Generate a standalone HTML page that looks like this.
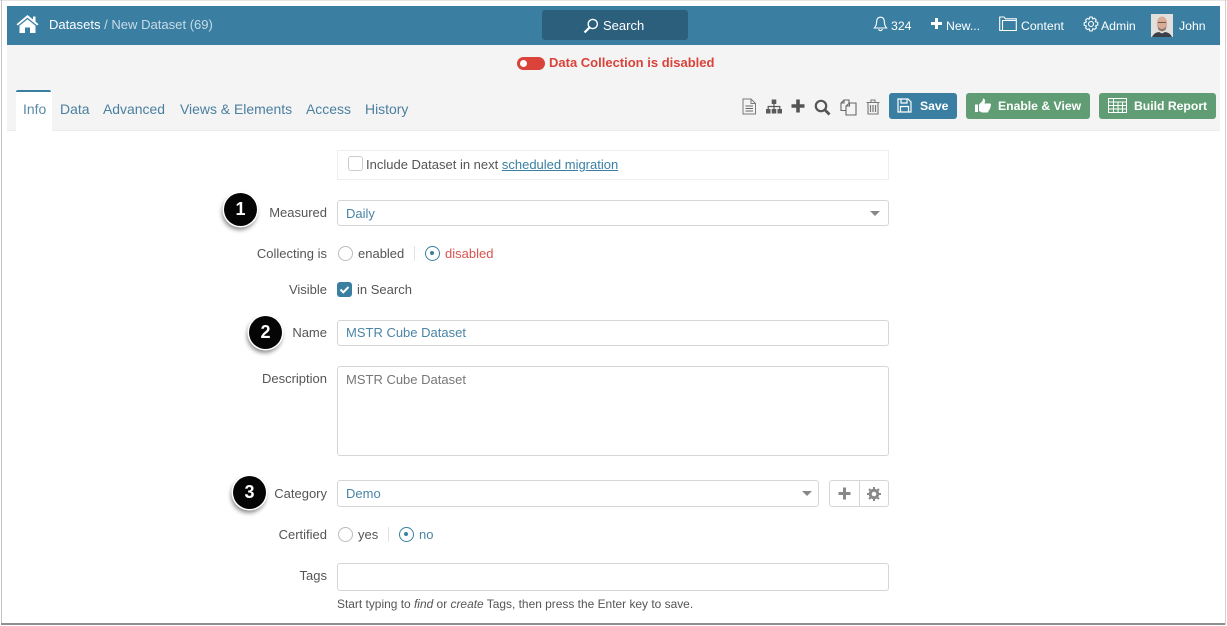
<!DOCTYPE html>
<html><head><meta charset="utf-8">
<style>
html,body{margin:0;padding:0;background:#fff}
#p{position:relative;width:1227px;height:626px;overflow:hidden;background:#fff;font-family:"Liberation Sans",sans-serif;font-size:13px;color:#555;filter:blur(.3px)}
#p>*{position:absolute}
.t{white-space:nowrap;line-height:16px}
.lbl{right:900px;white-space:nowrap;line-height:16px;color:#555;font-size:13px}
.box{box-sizing:border-box;background:#fff;border:1px solid #d6d6d6;border-radius:3px}
.val{color:#4a84a6;white-space:nowrap;line-height:16px;font-size:13px}
.tab{top:101px;color:#4a7f9f;font-size:13.95px;line-height:16px;white-space:nowrap}
.wh{color:#fff;font-size:12.25px;line-height:16px;white-space:nowrap}
.btn{border-radius:3px;height:26px;top:93px;color:#fff;font-weight:bold;font-size:12.2px;line-height:26px;white-space:nowrap;box-sizing:border-box}
.num{width:33px;height:33px;border-radius:50%;background:#050505;color:#fff;font-size:18px;font-weight:bold;text-align:center;line-height:33px;box-shadow:0 0 0 1.5px #fff,-1px 3px 4px 1px rgba(0,0,0,.45)}
.rad{box-sizing:border-box;width:15px;height:15px;border-radius:50%;border:1px solid #bbb;background:#fff}
.on{border:1.5px solid #3a7fa2}
.on:after{content:"";position:absolute;left:4px;top:4px;width:4px;height:4px;border-radius:50%;background:#3a7fa2}
</style></head><body>
<div id="p">
<div style="left:0;top:0;width:1227px;height:1px;background:#e4e4e4"></div>
<div style="left:1px;top:0;width:1px;height:625px;background:#c4c4c4"></div>
<div style="left:1px;top:623px;width:1224px;height:2px;background:#8e8e8e"></div>
<div style="left:1225px;top:0;width:1px;height:625px;background:#d0d0d0"></div>

<div style="left:7px;top:6px;width:1213px;height:39px;background:#3a7fa2"></div>
<div style="left:7px;top:45px;width:1213px;height:85px;background:#f4f4f4"></div>
<div style="left:7px;top:130px;width:1213px;height:1px;background:#ececec"></div>

<svg style="left:16px;top:14px" width="23" height="20" viewBox="0 0 23 20"><path d="M11.5 1 L17 5.5 V2.5 H19.5 V7.5 L22.5 10.2 L21.2 11.5 L11.5 3.6 L1.8 11.5 L.5 10.2 Z M11.5 5.2 L19.5 11.8 V19 H14 V13.5 H9 V19 H3.5 V11.8 Z" fill="#fff"/></svg>
<div class="wh" style="left:49px;top:17px;font-size:13.05px">Datasets <span style="color:#c8dbe6">/ New Dataset (69)</span></div>

<div style="left:542px;top:10px;width:146px;height:30px;border-radius:3px;background:#2b5f7b"></div>
<svg style="left:583px;top:18px" width="16" height="16" viewBox="0 0 16 16"><circle cx="9.8" cy="6" r="4.6" fill="none" stroke="#fff" stroke-width="1.4"/><path d="M6.5 9.5 L1.5 14.5" stroke="#fff" stroke-width="2.2"/></svg>
<div class="wh" style="left:603px;top:18px;font-size:13px">Search</div>

<svg style="left:873px;top:16px" width="15" height="16" viewBox="0 0 15 16"><path d="M7.5 1.2 C4.6 1.2 3.6 3.6 3.6 6 C3.6 9 2.8 10.4 1.4 12 H13.6 C12.2 10.4 11.4 9 11.4 6 C11.4 3.6 10.4 1.2 7.5 1.2 Z M5.8 13 C6 15.2 9 15.2 9.2 13" fill="none" stroke="#fff" stroke-width="1.1"/></svg>
<div class="wh" style="left:891px;top:18px">324</div>
<svg style="left:930px;top:17px" width="13" height="13" viewBox="0 0 13 13"><path d="M6.5 1 V12 M1 6.5 H12" stroke="#fff" stroke-width="3"/></svg>
<div class="wh" style="left:946px;top:18px">New...</div>
<svg style="left:999px;top:15px" width="18" height="17" viewBox="0 0 18 17"><path d="M.7 15.5 V2 H5 L6.5 3.8 H17.3 V15.5 Z M3.5 15.5 V5.5 H17.3" fill="none" stroke="#fff" stroke-width="1.1"/></svg>
<div class="wh" style="left:1021px;top:18px">Content</div>
<svg style="left:1083px;top:16px" width="16" height="16" viewBox="0 0 16 16"><circle cx="8" cy="8" r="2.5" fill="none" stroke="#fff" stroke-width="1.1"/><path d="M6.8 1 H9.2 L9.6 3 L11.4 2.2 L13.2 3.8 L12.4 5.6 L14.8 6.4 V9 L12.6 9.8 L13.4 11.8 L11.6 13.4 L9.8 12.6 L9.2 15 H6.8 L6.2 12.8 L4.4 13.6 L2.6 11.8 L3.4 10 L1.2 9.2 V6.8 L3.4 6 L2.6 4 L4.4 2.4 L6.2 3.2 Z" fill="none" stroke="#fff" stroke-width="1.1" stroke-linejoin="round"/></svg>
<div class="wh" style="left:1101px;top:18px">Admin</div>
<svg style="left:1151px;top:14px" width="22" height="23" viewBox="0 0 22 23"><rect width="22" height="23" fill="#e2e0dc"/><ellipse cx="11" cy="9.5" rx="5.200" ry="7" fill="#d8ac96"/><path d="M6.500 12 Q11 18 15.500 12 L14.500 16 L11 17.500 L7.500 16 Z" fill="#8b7568"/><path d="M7 8.500 H15" stroke="#6b5a50" stroke-width="1"/><path d="M1 23 Q3 18.500 8 18 L11 19.500 L14 18 Q19 18.500 21 23 Z" fill="#3c3f48"/></svg>
<div class="wh" style="left:1179px;top:18px">John</div>

<div style="left:517px;top:57px;width:28px;height:13px;border-radius:7px;background:#d9433a"></div>
<div style="left:520px;top:60px;width:7px;height:7px;border-radius:50%;background:#fff"></div>
<div class="t" style="left:549px;top:55px;color:#d9433a;font-weight:bold;font-size:13px">Data Collection is disabled</div>

<div style="left:16px;top:90px;width:36px;height:41px;background:#fff;border-radius:2px 2px 0 0"></div>
<div style="left:16px;top:90px;width:35px;height:2px;background:#3a7fa2;border-radius:2px 2px 0 0"></div>
<div class="tab" style="left:23px;color:#5b8aa6">Info</div>
<div class="tab" style="left:60px">Data</div>
<div class="tab" style="left:103px">Advanced</div>
<div class="tab" style="left:180px">Views &amp; Elements</div>
<div class="tab" style="left:306px">Access</div>
<div class="tab" style="left:365px">History</div>

<svg style="left:741px;top:98px" width="16" height="17" viewBox="0 0 16 17"><path d="M2 1 H10 L14.500 5.500 V16 H2 Z M10 1 V5.500 H14.500" fill="none" stroke="#7a7a7a" stroke-width="1"/><path d="M4.500 8 H12 M4.500 10.500 H12 M4.500 13 H12" stroke="#666" stroke-width="1"/></svg>
<svg style="left:766px;top:99px" width="16" height="15" viewBox="0 0 16 15"><path d="M5.700 0.500 H10.300 V5 H5.700 Z M0 10 H4.500 V14.500 H0 Z M5.700 10 H10.300 V14.500 H5.700 Z M11.500 10 H16 V14.500 H11.500 Z" fill="#5a5a5a"/><path d="M8 5 V10 M2.200 10 V7.500 H13.800 V10" fill="none" stroke="#5a5a5a" stroke-width="1.200"/></svg>
<svg style="left:791px;top:99px" width="14" height="14" viewBox="0 0 14 14"><path d="M7 .5 V13.500 M.5 7 H13.500" stroke="#555" stroke-width="3.600"/></svg>
<svg style="left:814px;top:99px" width="17" height="17" viewBox="0 0 17 17"><circle cx="7" cy="7" r="5.200" fill="none" stroke="#555" stroke-width="2.200"/><path d="M10.800 10.800 L15.500 15.500" stroke="#555" stroke-width="2.800"/></svg>
<svg style="left:840px;top:99px" width="17" height="17" viewBox="0 0 17 17"><path d="M1 4 L4 1 H9 V11.500 H1 Z M1 4 H4 V1" fill="none" stroke="#666" stroke-width="1.100"/><path d="M6 7 L9.500 4 H16 V16 H6 Z M9.500 4 V7 H6" fill="#f4f4f4" stroke="#666" stroke-width="1.100"/></svg>
<svg style="left:866px;top:99px" width="14" height="16" viewBox="0 0 14 16"><path d="M.5 3.500 H13.500 M5 3 V1 H9 V3 M2 4 V15 H12 V4" fill="none" stroke="#777" stroke-width="1.100"/><path d="M4.500 6 V13 M7 6 V13 M9.500 6 V13" stroke="#777" stroke-width="1.200"/></svg>

<div class="btn" style="left:889px;width:68px;background:#3a7fa2;padding-left:31px">Save</div>
<svg style="left:897px;top:98px" width="15" height="15" viewBox="0 0 15 15"><path d="M1 1 H11 L14 4 V14 H1 Z" fill="none" stroke="#fff" stroke-width="1.200"/><path d="M4 1 V5 H10 V1 M3.500 14 V8.500 H11.500 V14" fill="none" stroke="#fff" stroke-width="1.200"/></svg>
<div class="btn" style="left:966px;width:124px;background:#609d74;padding-left:32px">Enable &amp; View</div>
<svg style="left:975px;top:98px" width="16" height="15" viewBox="0 0 16 15"><path d="M0 6.500 H3 V14 H0 Z M4 6.500 L7.500 3 L8 0.500 C10 .5 10.500 2.500 9.500 5.500 H15 C16.300 5.500 16.300 8 15.300 8.300 C15.800 9.500 15.300 10.500 14.500 10.700 C14.800 11.800 14.300 12.500 13.500 12.700 C13.500 14 12.800 14.500 11.800 14.500 H7 L4 13 Z" fill="#fff"/></svg>
<div class="btn" style="left:1099px;width:117px;background:#609d74;padding-left:35px">Build Report</div>
<svg style="left:1108px;top:98px" width="19" height="15" viewBox="0 0 19 15"><path d="M.5 .5 H18.500 V14.500 H.5 Z M.5 4 H18.500 M.5 7.500 H18.500 M.5 11 H18.500 M5.500 .5 V14.500 M10 4 V14.500 M14.500 4 V14.500" fill="none" stroke="#fff" stroke-width="1"/></svg>

<div style="left:337px;top:150px;width:552px;height:30px;box-sizing:border-box;border:1px solid #eeeeee"></div>
<div style="left:348px;top:156px;width:15px;height:15px;box-sizing:border-box;border:1px solid #ccc;border-radius:3px;background:#fff"></div>
<div class="t" style="left:366px;top:157px">Include Dataset in next <span style="color:#3a7fa2;text-decoration:underline">scheduled migration</span></div>

<div class="num" style="left:224px;top:193px">1</div>
<div class="lbl" style="top:205px">Measured</div>
<div class="box" style="left:337px;top:200px;width:552px;height:26px"></div>
<div class="val" style="left:346px;top:206px">Daily</div>
<div style="left:870px;top:211px;width:0;height:0;border-left:5px solid transparent;border-right:5px solid transparent;border-top:5px solid #888"></div>

<div class="lbl" style="top:246px">Collecting is</div>
<div class="rad" style="left:338px;top:246px"></div>
<div class="t" style="left:358px;top:246px">enabled</div>
<div style="left:414px;top:246px;width:1px;height:15px;background:#e2e2e2"></div>
<div class="rad on" style="left:425px;top:246px"></div>
<div class="t" style="left:445px;top:246px;color:#d9534f">disabled</div>

<div class="lbl" style="top:282px">Visible</div>
<div style="left:337px;top:282px;width:15px;height:15px;border-radius:3px;background:#3a7fa2"></div>
<svg style="left:337px;top:282px" width="15" height="15" viewBox="0 0 15 15"><path d="M3.500 7.500 L6.300 10.300 L11.500 5" fill="none" stroke="#fff" stroke-width="2"/></svg>
<div class="t" style="left:357px;top:282px">in Search</div>

<div class="num" style="left:249px;top:316px">2</div>
<div class="lbl" style="top:325px">Name</div>
<div class="box" style="left:337px;top:320px;width:552px;height:26px"></div>
<div class="val" style="left:346px;top:325px">MSTR Cube Dataset</div>

<div class="lbl" style="top:371px">Description</div>
<div class="box" style="left:337px;top:366px;width:552px;height:90px"></div>
<div class="t" style="left:346px;top:372px;color:#777">MSTR Cube Dataset</div>

<div class="num" style="left:233px;top:476px">3</div>
<div class="lbl" style="top:486px">Category</div>
<div class="box" style="left:337px;top:480px;width:482px;height:27px"></div>
<div class="val" style="left:346px;top:486px">Demo</div>
<div style="left:802px;top:491px;width:0;height:0;border-left:5px solid transparent;border-right:5px solid transparent;border-top:5px solid #888"></div>
<div class="box" style="left:829px;top:480px;width:60px;height:27px"></div>
<div style="left:859px;top:481px;width:1px;height:25px;background:#d6d6d6"></div>
<svg style="left:838px;top:487px" width="13" height="13" viewBox="0 0 13 13"><path d="M6.500 .5 V12.500 M.5 6.500 H12.500" stroke="#888" stroke-width="3"/></svg>
<svg style="left:867px;top:487px" width="14" height="14" viewBox="0 0 14 14"><circle cx="7" cy="7" r="3.800" fill="none" stroke="#888" stroke-width="3"/><path d="M7 0 V14 M0 7 H14 M2 2 L12 12 M12 2 L2 12" stroke="#888" stroke-width="2" stroke-dasharray="2.500 9 2.500 0"/></svg>

<div class="lbl" style="top:527px">Certified</div>
<div class="rad" style="left:338px;top:527px"></div>
<div class="t" style="left:358px;top:527px">yes</div>
<div style="left:388px;top:527px;width:1px;height:15px;background:#e2e2e2"></div>
<div class="rad on" style="left:399px;top:527px"></div>
<div class="t" style="left:419px;top:527px;color:#4a84a6">no</div>

<div class="lbl" style="top:568px">Tags</div>
<div class="box" style="left:337px;top:563px;width:552px;height:28px"></div>
<div class="t" style="left:337px;top:596px;font-size:11.95px">Start typing to <i>find</i> or <i>create</i> Tags, then press the Enter key to save.</div>
</div>
</body></html>
